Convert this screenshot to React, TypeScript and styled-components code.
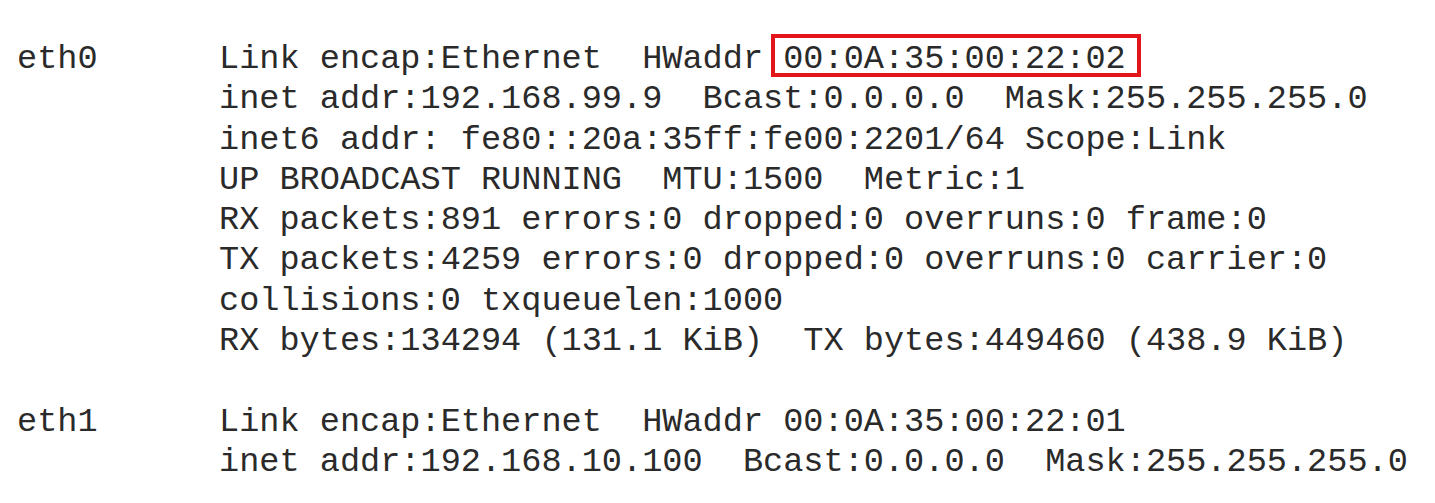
import React from "react";
import styled, { createGlobalStyle } from "styled-components";

const Global = createGlobalStyle`
  html, body { margin: 0; padding: 0; background: #ffffff; }
  body { overflow: hidden; }
`;

const Page = styled.div`
  padding: 39px 0 0 17px;
  font-family: "Courier New", "Nimbus Mono PS", "FreeMono", "Liberation Mono", monospace;
  font-size: 33.6px;
  line-height: 40.3px;
  color: #2a2a2a;
  white-space: pre;
`;

const Block = styled.div`
  display: grid;
  grid-template-columns: 202px auto;
  justify-content: start;
  & + & { margin-top: 40.3px; }
`;

const Name = styled.div``;

const Lines = styled.div`
  display: flex;
  flex-direction: column;
`;

const Line = styled.div``;

const Boxed = styled.span`
  position: relative;
  &::after {
    content: "";
    position: absolute;
    left: -12px;
    right: -15px;
    top: -6px;
    bottom: 1px;
    border: 4px solid #e3141c;
  }
`;

type Iface = { name: string; lines: React.ReactNode[] };

const data: Iface[] = [
  {
    name: "eth0",
    lines: [
      <>Link encap:Ethernet  HWaddr <Boxed>00:0A:35:00:22:02</Boxed></>,
      "inet addr:192.168.99.9  Bcast:0.0.0.0  Mask:255.255.255.0",
      "inet6 addr: fe80::20a:35ff:fe00:2201/64 Scope:Link",
      "UP BROADCAST RUNNING  MTU:1500  Metric:1",
      "RX packets:891 errors:0 dropped:0 overruns:0 frame:0",
      "TX packets:4259 errors:0 dropped:0 overruns:0 carrier:0",
      "collisions:0 txqueuelen:1000",
      "RX bytes:134294 (131.1 KiB)  TX bytes:449460 (438.9 KiB)",
    ],
  },
  {
    name: "eth1",
    lines: [
      "Link encap:Ethernet  HWaddr 00:0A:35:00:22:01",
      "inet addr:192.168.10.100  Bcast:0.0.0.0  Mask:255.255.255.0",
    ],
  },
];

export default function App() {
  return (
    <>
      <Global />
      <Page>
        {data.map((iface) => (
          <Block key={iface.name}>
            <Name>{iface.name}</Name>
            <Lines>
              {iface.lines.map((l, i) => (
                <Line key={i}>{l}</Line>
              ))}
            </Lines>
          </Block>
        ))}
      </Page>
    </>
  );
}
